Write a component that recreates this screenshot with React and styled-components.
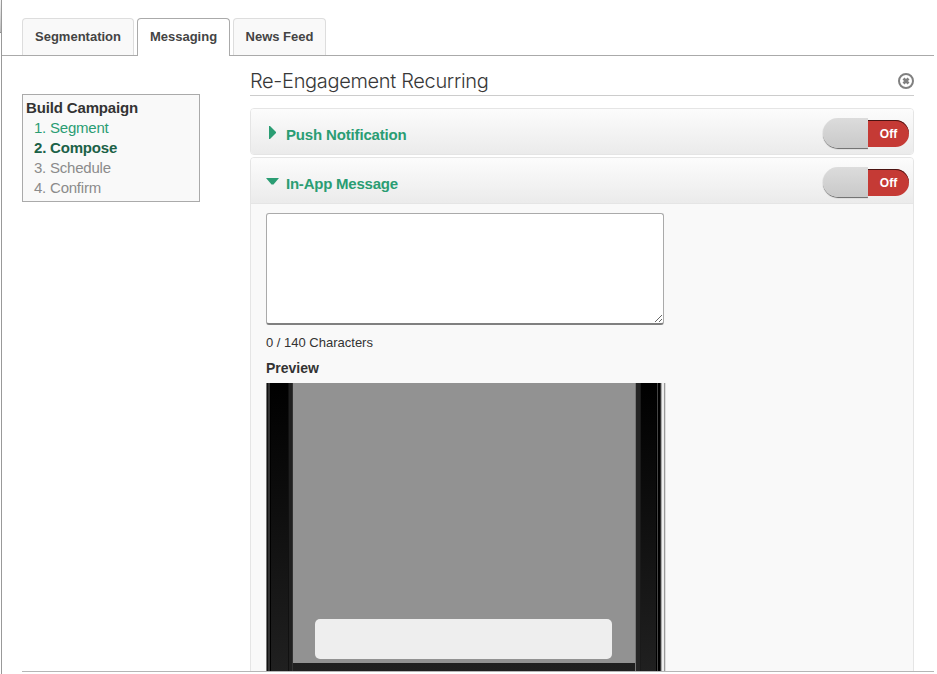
import React, { useState } from "react";
import styled, { createGlobalStyle, css } from "styled-components";

const GlobalStyle = createGlobalStyle`
  *, *::before, *::after { box-sizing: border-box; }
  body {
    margin: 0;
    background: #fff;
    overflow: hidden;
    font-family: "Liberation Sans", Arial, sans-serif;
    color: #333;
  }
`;

const Page = styled.div`
  display: flex;
  width: 937px;
  height: 674px;
  overflow: hidden;
`;

const WindowEdge = styled.div`
  width: 1px;
  height: 33px;
  flex: none;
  background: linear-gradient(#f4f4f4, #bbb);
  border-bottom: 1px solid #8e8e8e;
`;

const Frame = styled.div`
  width: 933px;
  flex: none;
  border-left: 1px solid #999;
`;

const TabBar = styled.nav`
  display: flex;
  gap: 3px;
  height: 56px;
  padding: 18px 0 0 20px;
  border-bottom: 1px solid #aaa;
`;

const Tab = styled.button`
  width: ${(p) => p.$width}px;
  height: 37px;
  padding: 0 0 1px;
  border: 1px solid #ddd;
  border-bottom: 0;
  border-radius: 4px 4px 0 0;
  background: #f9f9f9;
  color: #444;
  font: bold 13px "Liberation Sans", Arial, sans-serif;
  white-space: nowrap;
  ${(p) =>
    p.$active &&
    css`
      height: 38px;
      padding-bottom: 2px;
      border-color: #aaa;
      background: #fff;
    `}
`;

const Content = styled.div`
  display: flex;
  align-items: flex-start;
  height: 616px;
  margin-left: 20px;
  border-bottom: 1px solid #b5b5b5;
  overflow: hidden;
`;

const Steps = styled.aside`
  width: 178px;
  height: 108px;
  flex: none;
  margin: 38px 50px 0 0;
  padding: 3px;
  border: 1px solid #aaa;
  background: #f9f9f9;
  font-size: 15px;
  line-height: 20px;
`;

const StepsTitle = styled.div`
  font-size: 15px;
  font-weight: bold;
  letter-spacing: -0.15px;
  white-space: nowrap;
`;

const stepColors = { done: "#2a9d73", current: "#1b6147", next: "#8b8b8b" };

const Step = styled.div`
  padding-left: 8px;
  color: ${(p) => stepColors[p.$state]};
  font-weight: ${(p) => (p.$state === "current" ? "bold" : "normal")};
  letter-spacing: ${(p) => (p.$state === "current" ? "-0.2px" : "-0.22px")};
  white-space: nowrap;
`;

const Main = styled.main`
  width: 664px;
  flex: none;
`;

const TitleRow = styled.header`
  display: flex;
  align-items: center;
  justify-content: space-between;
  height: 40px;
  margin-bottom: 12px;
  padding-top: 11px;
  border-bottom: 1px solid #ccc;
`;

const Title = styled.h1`
  margin: 0;
  font: 300 20px/28px Inter, "Liberation Sans", sans-serif;
  letter-spacing: -0.33px;
  color: #383838;
  white-space: nowrap;
`;

const CloseIcon = styled.svg`
  display: block;
  width: 16px;
  height: 16px;
`;

const Panel = styled.section`
  margin-bottom: 2px;
  border: 1px solid #e5e5e5;
  border-radius: 4px;
  background: #f9f9f9;
  overflow: hidden;
`;

const PanelHeader = styled.div`
  display: flex;
  align-items: center;
  height: ${(p) => (p.$open ? 46 : 45)}px;
  padding: 0 4px 0 15px;
  background: linear-gradient(#fcfcfc, #ebebeb);
  border-bottom: ${(p) => (p.$open ? "1px solid #e5e5e5" : "0")};
`;

const Arrow = styled.svg`
  flex: none;
  width: 13px;
  height: 13px;
  margin: 2px 7px 0 0;
  fill: #2a9d73;
`;

const PanelTitle = styled.h2`
  flex: 1;
  margin: 0;
  padding-top: 6px;
  font-size: 15px;
  line-height: 20px;
  font-weight: bold;
  letter-spacing: ${(p) => (p.$open ? -0.23 : -0.16)}px;
  color: #2a9d73;
`;

const Switch = styled.button`
  display: flex;
  align-items: flex-start;
  width: 87px;
  height: 31px;
  padding: 0 0 0 1px;
  margin-top: 3px;
  border: 0;
  background: none;
`;

const SwitchKnob = styled.span`
  width: 45px;
  height: 30px;
  border-radius: 16px 0 0 16px;
  background: linear-gradient(#dcdcdc, #c9c9c9);
  box-shadow: 0 1px 1px #666;
  clip-path: inset(0 0 -3px -3px);
`;

const SwitchLabel = styled.span`
  width: 41px;
  height: 27px;
  margin-top: 2px;
  border-radius: 0 14px 14px 0;
  background: #c53a35;
  box-shadow: inset 0 1px 0 #4a1311;
  color: #fff;
  font: bold 12px/28px "Liberation Sans", Arial, sans-serif;
  text-align: center;
`;

const PanelBody = styled.div`
  height: 500px;
  padding: 9px 15px 0;
`;

const MessageInput = styled.textarea`
  display: block;
  width: 398px;
  height: 112px;
  border: 1px solid #aaa;
  border-bottom: 2px solid #808080;
  border-radius: 3px;
  background: #fff;
  outline: 0;
`;

const Counter = styled.div`
  margin-top: 10px;
  font-size: 13px;
  line-height: 16px;
`;

const PreviewLabel = styled.div`
  margin: 9px 0 6px;
  font-size: 14px;
  line-height: 17px;
  font-weight: bold;
`;

const Phone = styled.div`
  width: 400px;
  height: 290px;
  padding: 0 31px 0 27px;
  background:
    linear-gradient(
      90deg,
      #777 0 1px, #111 1px 2px, #333 2px 4px, #000 4px 5px, transparent 5px 22px,
      #111 22px 23px, #202020 23px 26px, #333 26px 27px, transparent 27px 369px,
      #777 369px 370px, #252525 370px 374px, #1a1a1a 374px 375px, transparent 375px 390px,
      #000 390px 391px, #444 391px 392px, #000 392px 394px, #333 394px 395px,
      #aaa 395px 396px, #eee 396px 398px, #999 398px 399px, #ddd 399px 400px
    ),
    linear-gradient(#000, #202020);
`;

const PhoneScreen = styled.div`
  display: flex;
  align-items: flex-end;
  height: 280px;
  padding: 0 23px 4px 22px;
  background: #929292;
`;

const Bubble = styled.div`
  width: 297px;
  height: 40px;
  border-radius: 5px;
  background: #eee;
`;

function Toggle() {
  return (
    <Switch type="button" role="switch" aria-checked="false">
      <SwitchKnob />
      <SwitchLabel>Off</SwitchLabel>
    </Switch>
  );
}

function AccordionPanel({ title, open, children }) {
  return (
    <Panel>
      <PanelHeader $open={open}>
        <Arrow viewBox="0 0 13 13">
          <path d={open ? "M0 3h13L7.5 9.5h-2z" : "M3 0h1L10 6v1L4 13H3z"} />
        </Arrow>
        <PanelTitle $open={open}>{title}</PanelTitle>
        <Toggle />
      </PanelHeader>
      {open && <PanelBody>{children}</PanelBody>}
    </Panel>
  );
}

export default function App() {
  const [message, setMessage] = useState("");
  return (
    <Page>
      <GlobalStyle />
      <WindowEdge />
      <Frame>
        <TabBar>
          <Tab $width={112}>Segmentation</Tab>
          <Tab $width={93} $active>Messaging</Tab>
          <Tab $width={93}>News Feed</Tab>
        </TabBar>
        <Content>
          <Steps>
            <StepsTitle>Build Campaign</StepsTitle>
            <Step $state="done">1. Segment</Step>
            <Step $state="current">2. Compose</Step>
            <Step $state="next">3. Schedule</Step>
            <Step $state="next">4. Confirm</Step>
          </Steps>
          <Main>
            <TitleRow>
              <Title>Re-Engagement Recurring</Title>
              <CloseIcon viewBox="0 0 16 16" fill="none" stroke="#808080">
                <circle cx="8" cy="8" r="7" strokeWidth="2" />
                <path d="M5.5 5.5l5 5M10.5 5.5l-5 5" strokeWidth="2.8" />
              </CloseIcon>
            </TitleRow>
            <AccordionPanel title="Push Notification" />
            <AccordionPanel title="In-App Message" open>
              <MessageInput value={message} onChange={(e) => setMessage(e.target.value)} />
              <Counter>{message.length} / 140 Characters</Counter>
              <PreviewLabel>Preview</PreviewLabel>
              <Phone>
                <PhoneScreen>
                  <Bubble />
                </PhoneScreen>
              </Phone>
            </AccordionPanel>
          </Main>
        </Content>
      </Frame>
    </Page>
  );
}
